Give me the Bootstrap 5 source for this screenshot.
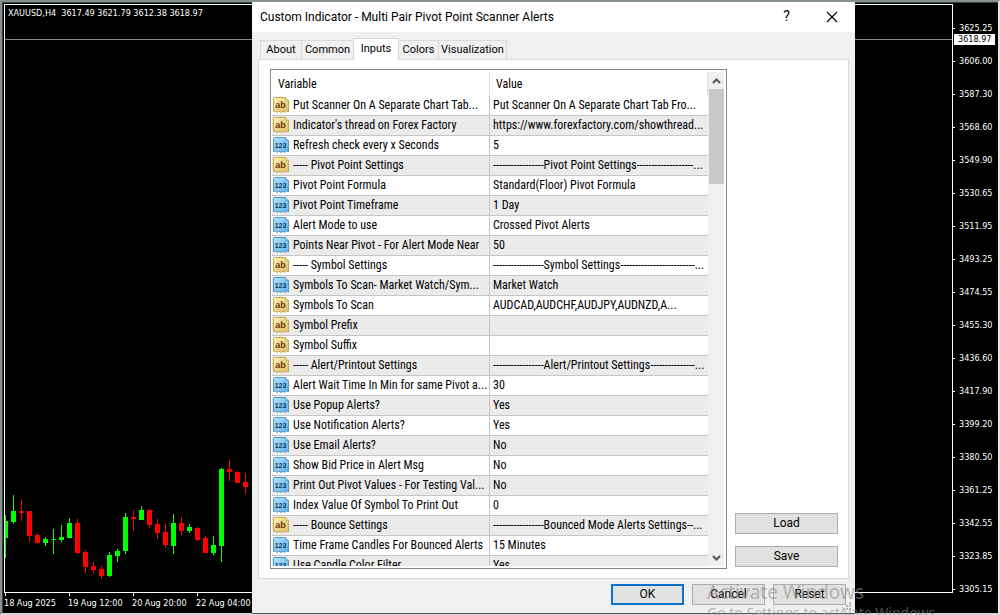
<!DOCTYPE html>
<html lang="en">
<head>
<meta charset="utf-8">
<meta name="viewport" content="width=device-width, initial-scale=1">
<title>Custom Indicator - Multi Pair Pivot Point Scanner Alerts</title>
<link href="https://cdn.jsdelivr.net/npm/bootstrap@5.3.0/dist/css/bootstrap.min.css" rel="stylesheet">
<style>
  body { background: #000; font-family: "Roboto Condensed", Roboto, "Liberation Sans", sans-serif; font-size: 12px; line-height: 16px; color: #000; }
  /* chart window behind the dialog */
  .chart-window { height: 100vh; background: #000; color: #fff; border: 2px solid #87918f; border-right-color: #e4e4e4; border-bottom-color: #d8d8d8; font: 9px/12px "DejaVu Sans Condensed", "DejaVu Sans", sans-serif; padding: 2px 0 0 2px; box-shadow: inset 1px 1px #3a3f3f; }
  .chart-row { min-height: 0; }
  .plot { border: 1px solid #fff; min-width: 0; }
  .plot svg { position: absolute; left: 0; bottom: 0; }
  .quote { padding: 2px 3px; white-space: pre; }
  .price-line { position: absolute; left: 0; right: 0; top: 34px; border-top: 1px solid #8c8c8c; }
  .price-axis { width: 45px; padding-top: 8px; }
  .price-axis li { height: 33px; line-height: 33px; padding-left: 6px; position: relative; }
  .price-axis li::before { content: ""; position: absolute; left: 0; top: 16px; width: 2px; border-top: 1px solid #fff; }
  .price-now { position: absolute; right: 3px; top: 32px; width: 41px; background: #fff; color: #000; padding-left: 4px; line-height: 11px; }
  .time-axis { height: 20px; flex: none; }
  .time-axis span { width: 64px; flex: none; padding-top: 4px; white-space: nowrap; position: relative; }
  .time-axis span::before { content: ""; position: absolute; left: 1px; top: 0; height: 3px; border-left: 1px solid #fff; }

  /* dialog */
  .dlg { position: absolute; left: 252px; top: 2px; bottom: 1px; width: 603px; background: #f0f0f0; border-bottom: 1px solid #555; }
  .dlg-title { height: 30px; background: #fff; padding-left: 8px; }
  .dlg-title h1 { font: 12px/16px Roboto, "Liberation Sans", sans-serif; }
  .dlg-title button { width: 45px; height: 30px; border: 0; background: none; padding: 0 2px 2px 0; font: 14px/16px Roboto, sans-serif; color: #000; }
  .tabs { height: 29px; padding: 0 8px; position: relative; z-index: 1; margin-bottom: -1px; }
  .tabs a { color: #000; text-decoration: none; height: 19px; line-height: 18px; border: 1px solid #d9d9d9; border-left: 0; border-bottom: 0; text-align: center; margin-bottom: 1px; white-space: nowrap; font-family: Roboto, sans-serif; font-size: 11px; }
  .tabs a:first-child { border-left: 1px solid #d9d9d9; }
  .tabs a.active { background: #fff; height: 22px; line-height: 20px; border-left: 1px solid #d9d9d9; margin: 0 0 0 -1px; }
  .w-s { width: 42px; } .w-m { width: 52px; } .w-a { width: 46px; } .w-c { width: 40px; } .w-l { width: 68px; }
  .sheet { margin: 0 6px; background: #fff; border: 1px solid #d9d9d9; padding: 9px 10px 9px 11px; min-height: 0; }
  .list { width: 457px; border: 1px solid #82878f; padding: 2px 2px 2px 1px; background: #fff; min-height: 0; }
  .list-body { overflow: hidden; min-height: 0; }
  .list table { table-layout: fixed; width: 100%; border-collapse: separate; border-spacing: 0; }
  .list th { height: 24px; font-weight: 400; padding: 0 6px; border-right: 1px solid #e0e0e0; }
  .list td { height: 20px; padding: 0 2px; border-bottom: 1px solid #c6c6c6; white-space: nowrap; overflow: hidden; line-height: 19px; }
  .list td:first-child { border-right: 1px solid #c6c6c6; padding-left: 1px; }
  .list tbody tr:nth-child(even) td { background: #ebebeb; }
  .list td svg { width: 16px; height: 16px; margin-right: 4px; vertical-align: -4px; }
  .list td:last-child { padding-left: 3px; }
  .col-var { width: 218px; }
  .scroller { width: 17px; padding-left: 1px; background: #f0f0f0; }
  .scroller i { display: block; width: 15px; height: 95px; background: #c8c8c8; }
  .scroller svg { display: block; width: 15px; height: 17px; }
  .dlg-btn { height: 21px; border: 1px solid #adadad; background: #e1e1e1; color: #000; padding: 0; font: 12px/16px Roboto, sans-serif; border-radius: 0; }
  .side { width: 103px; gap: 12px; padding-bottom: 2px; }
  .dlg-foot { height: 35px; padding: 5px 9px; gap: 8px; }
  .dlg-foot .dlg-btn { width: 73px; }
  .dlg-foot .main-btn { border: 2px solid #0c72c6; }
  .grip { position: absolute; right: 3px; bottom: 2px; }

  .notice { position: absolute; left: 707px; top: 581px; bottom: 0; right: 0; overflow: hidden; color: rgba(140,140,140,.6); font: 19px/22px "Noto Sans", sans-serif; pointer-events: none; white-space: nowrap; }
  .notice small { display: block; font-size: 14px; line-height: 20px; }
</style>
</head>
<body class="vh-100 overflow-hidden position-relative">

<main class="chart-window d-flex flex-column position-relative">
  <div class="chart-row d-flex flex-grow-1">
    <div class="plot flex-grow-1 position-relative">
      <div class="quote">XAUUSD,H4  3617.49 3621.79 3612.38 3618.97</div>
      <div class="price-line"></div>
      <svg id="candles" width="250" height="150" viewBox="0 0 250 150" shape-rendering="crispEdges" aria-label="Candles"></svg>
    </div>
    <ul class="price-axis list-unstyled mb-0" id="prices"></ul>
  </div>
  <div class="time-axis d-flex">
    <span>18 Aug 2025</span><span>19 Aug 12:00</span><span>20 Aug 20:00</span><span>22 Aug 04:00</span>
  </div>
  <div class="price-now">3618.97</div>
</main>

<section class="dlg d-flex flex-column" role="dialog" aria-labelledby="dlgTitle">
  <header class="dlg-title d-flex align-items-center">
    <h1 class="m-0 me-auto" id="dlgTitle">Custom Indicator - Multi Pair Pivot Point Scanner Alerts</h1>
    <button type="button" aria-label="Help">?</button>
    <button type="button" aria-label="Close"><svg width="12" height="12" viewBox="0 0 12 12"><path d="M1 1l10 10M11 1L1 11" stroke="#000" stroke-width="1.1" fill="none"/></svg></button>
  </header>
  <nav class="tabs d-flex align-items-end">
    <a class="w-s" href="#">About</a><a class="w-m" href="#">Common</a><a class="w-a active" href="#" aria-current="page">Inputs</a><a class="w-c" href="#">Colors</a><a class="w-l" href="#">Visualization</a>
  </nav>
  <div class="sheet flex-grow-1 d-flex justify-content-between">
    <div class="list d-flex">
      <div class="list-body flex-grow-1">
        <table>
          <colgroup><col class="col-var"><col></colgroup>
          <thead><tr><th scope="col">Variable</th><th scope="col">Value</th></tr></thead>
          <tbody id="rows"></tbody>
        </table>
      </div>
      <div class="scroller d-flex flex-column">
        <svg viewBox="0 0 15 17"><path d="M4 11l3.500-3.500L11 11" fill="none" stroke="#555" stroke-width="2"/></svg>
        <i></i>
        <svg class="mt-auto" viewBox="0 0 15 17"><path d="M4 7l3.500 3.500L11 7" fill="none" stroke="#555" stroke-width="2"/></svg>
      </div>
    </div>
    <div class="side d-flex flex-column justify-content-end">
      <button class="dlg-btn" type="button">Load</button>
      <button class="dlg-btn" type="button">Save</button>
    </div>
  </div>
  <footer class="dlg-foot d-flex justify-content-end">
    <button class="dlg-btn main-btn" type="button">OK</button>
    <button class="dlg-btn" type="button">Cancel</button>
    <button class="dlg-btn" type="button">Reset</button>
  </footer>
  <svg class="grip" width="9" height="9" fill="#b5b5b5"><path d="M6 0h2v2h-2zM3 3h2v2h-2zM6 3h2v2h-2zM0 6h2v2h-2zM3 6h2v2h-2zM6 6h2v2h-2z"/></svg>
</section>

<div class="notice">Activate Windows<small>Go to Settings to activate Windows.</small></div>

<svg class="position-absolute" width="0" height="0" aria-hidden="true">
  <defs>
    <linearGradient id="gold" x2="1" y2="1"><stop offset="0" stop-color="#fdf6b4"/><stop offset="1" stop-color="#dcb765"/></linearGradient>
    <linearGradient id="sky" x2="1" y2="1"><stop offset="0" stop-color="#b5e4fb"/><stop offset="1" stop-color="#5fb0e6"/></linearGradient>
  </defs>
</svg>

<script>
const rows = [
  ["ab", "Put Scanner On A Separate Chart Tab...", "Put Scanner On A Separate Chart Tab Fro..."],
  ["ab", "Indicator's thread on Forex Factory", "https://www.forexfactory.com/showthread..."],
  ["123", "Refresh check every x Seconds", "5"],
  ["ab", "----- Pivot Point Settings", "-----------------Pivot Point Settings-------------------..."],
  ["123", "Pivot Point Formula", "Standard(Floor) Pivot Formula"],
  ["123", "Pivot Point Timeframe", "1 Day"],
  ["123", "Alert Mode to use", "Crossed Pivot Alerts"],
  ["123", "Points Near Pivot - For Alert Mode Near", "50"],
  ["ab", "----- Symbol Settings", "-----------------Symbol Settings-------------------------..."],
  ["123", "Symbols To Scan- Market Watch/Sym...", "Market Watch"],
  ["ab", "Symbols To Scan", "AUDCAD,AUDCHF,AUDJPY,AUDNZD,A..."],
  ["ab", "Symbol Prefix", ""],
  ["ab", "Symbol Suffix", ""],
  ["ab", "----- Alert/Printout Settings", "-----------------Alert/Printout Settings---------------..."],
  ["123", "Alert Wait Time In Min for same Pivot a...", "30"],
  ["123", "Use Popup Alerts?", "Yes"],
  ["123", "Use Notification Alerts?", "Yes"],
  ["123", "Use Email Alerts?", "No"],
  ["123", "Show Bid Price in Alert Msg", "No"],
  ["123", "Print Out Pivot Values - For Testing Val...", "No"],
  ["123", "Index Value Of Symbol To Print Out", "0"],
  ["ab", "----- Bounce Settings", "-----------------Bounced Mode Alerts Settings--..."],
  ["123", "Time Frame Candles For Bounced Alerts", "15 Minutes"],
  ["123", "Use Candle Color Filter", "Yes"]
];
const sheetPath = "M.5 1.500Q.5.5 1.500.5H12.500L15.500 3.500V15L13.500 14L12 15.500L10 14L8 15.500L6 14L4 15.500L2.500 14L.5 14.500Z";
function icon(kind) {
  const gold = kind === "ab", edge = gold ? "#c9a552" : "#4f97cc";
  return `<svg viewBox="0 0 16 16" aria-hidden="true"><path d="${sheetPath}" fill="url(#${gold ? "gold" : "sky"})" stroke="${edge}"/>` +
    `<path d="M12.500.5V3.500H15.500" fill="#fff" fill-opacity=".5" stroke="${edge}" stroke-width=".7"/>` +
    `<text x="7.500" y="11" text-anchor="middle" font-family="Liberation Sans" font-weight="bold" font-size="${gold ? 9 : 7}" fill="${gold ? "#6b3a08" : "#0d3a66"}">${kind}</text></svg>`;
}
document.getElementById("rows").innerHTML = rows.map(([k, n, v]) => `<tr><td>${icon(k)}${n}</td><td>${v}</td></tr>`).join("");

document.getElementById("prices").innerHTML = ["3625.25", "3606.00", "3587.30", "3568.60", "3549.90", "3530.65", "3511.95", "3493.25", "3474.55",
  "3455.30", "3436.60", "3417.90", "3399.20", "3380.50", "3361.25", "3342.55", "3323.85", "3305.15"].map(p => `<li>${p}</li>`).join("");

/* each candle: high, body top, body bottom, low, direction (1 = up) */
const candles = [
  [65,71,88,108,1],[45,61,72,74,1],[50,61,63,71,0],[61,61,86,92,0],[83,85,93,94,0],[87,89,93,96,1],[79,89,90,104,1],[75,87,90,92,1],
  [68,73,88,88,1],[69,73,103,104,0],[100,102,117,123,0],[112,116,120,123,0],[116,119,126,129,0],[102,105,126,127,1],[99,101,106,112,1],
  [63,67,101,104,1],[60,67,69,81,0],[56,60,70,70,1],[59,60,75,78,0],[69,74,83,89,0],[74,82,95,98,0],[64,73,96,104,1],[67,73,81,85,0],
  [74,77,81,83,1],[77,78,90,91,0],[86,88,103,103,0],[86,95,103,105,1],[18,19,96,112,1],[10,19,22,31,0],[21,22,33,33,0],[23,32,37,44,0]
];
document.getElementById("candles").innerHTML = candles.map(([h, t, b, l, up], i) => {
  const x = i * 8, c = up ? "#00ff00" : "#ff0000";
  return `<rect x="${x}" y="${h + 8}" width="1" height="${l - h}" fill="${c}"/><rect x="${x - 2}" y="${t + 8}" width="5" height="${b - t}" fill="${c}"/>`;
}).join("");
</script>
<script src="https://cdn.jsdelivr.net/npm/bootstrap@5.3.0/dist/js/bootstrap.bundle.min.js"></script>
</body>
</html>
